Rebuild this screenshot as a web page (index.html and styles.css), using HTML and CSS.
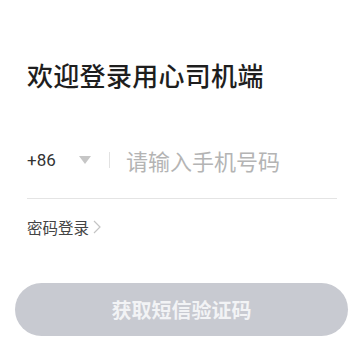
FILE: index.html
```html
<!DOCTYPE html>
<html lang="zh-CN">
<head>
    <meta charset="UTF-8">
    <meta name="viewport" content="width=device-width, initial-scale=1.0">
    <title>欢迎登录用心司机端</title>
    <link rel="stylesheet" href="styles.css">
</head>
<body>
    <div class="login-page">
        <h1 class="login-title">欢迎登录用心司机端</h1>

        <div class="phone-row">
            <div class="area-code">+86</div>
            <svg class="area-arrow" viewBox="0 0 12 8">
                <path d="M0 0h12L6 8z"/>
            </svg>
            <div class="phone-divider"></div>
            <input class="phone-input" type="tel" placeholder="请输入手机号码">
        </div>

        <a class="password-link" href="#">
            密码登录
            <svg class="link-arrow" viewBox="0 0 8 14">
                <path d="M1 1l6 6-6 6"/>
            </svg>
        </a>
    </div>

    <div class="button-wrap">
        <button class="sms-button" disabled>获取短信验证码</button>
    </div>
</body>
</html>
```

FILE: styles.css
```css
* {
    margin: 0;
    padding: 0;
    box-sizing: border-box;
}

body {
    font-family: 'Noto Sans CJK SC', 'Noto Sans', sans-serif;
    background: #ffffff;
    color: #222222;
}

/* Form area */
.login-page {
    padding: 56px 23px 0 27px;
}

.login-title {
    font-size: 26px;
    font-weight: 500;
    line-height: 38px;
    color: #1e1e1e;
    letter-spacing: 0.3px;
}

.phone-row {
    display: flex;
    align-items: center;
    height: 78px;
    margin-top: 27px;
    border-bottom: 1px solid #e4e4e4;
}

.area-code {
    font-family: 'Roboto', 'Noto Sans', sans-serif;
    font-size: 17px;
    color: #333333;
    width: 52px;
}

.area-arrow {
    width: 12px;
    height: 8px;
    fill: #c6c6c6;
    margin-right: 18px;
}

.phone-divider {
    width: 1px;
    height: 16px;
    background: #e2e2e2;
    margin-right: 16px;
}

.phone-input {
    flex: 1;
    min-width: 0;
    border: none;
    outline: none;
    font-family: 'Noto Sans CJK SC', sans-serif;
    font-size: 22px;
    color: #333333;
    background: transparent;
}

.phone-input::placeholder {
    color: #b4b4b4;
}

.password-link {
    display: inline-flex;
    align-items: center;
    gap: 4px;
    margin-top: 17px;
    font-size: 15.5px;
    color: #444444;
    text-decoration: none;
}

.link-arrow {
    width: 8px;
    height: 14px;
    fill: none;
    stroke: #c4c4c4;
    stroke-width: 1.2;
}

/* Bottom button */
.button-wrap {
    padding: 44px 12px 0 15px;
}

.sms-button {
    width: 100%;
    height: 53px;
    border: none;
    border-radius: 27px;
    background: #c8cad1;
    color: #f2f3f5;
    font-family: 'Noto Sans CJK SC', sans-serif;
    font-size: 20px;
    font-weight: 700;
}
```
